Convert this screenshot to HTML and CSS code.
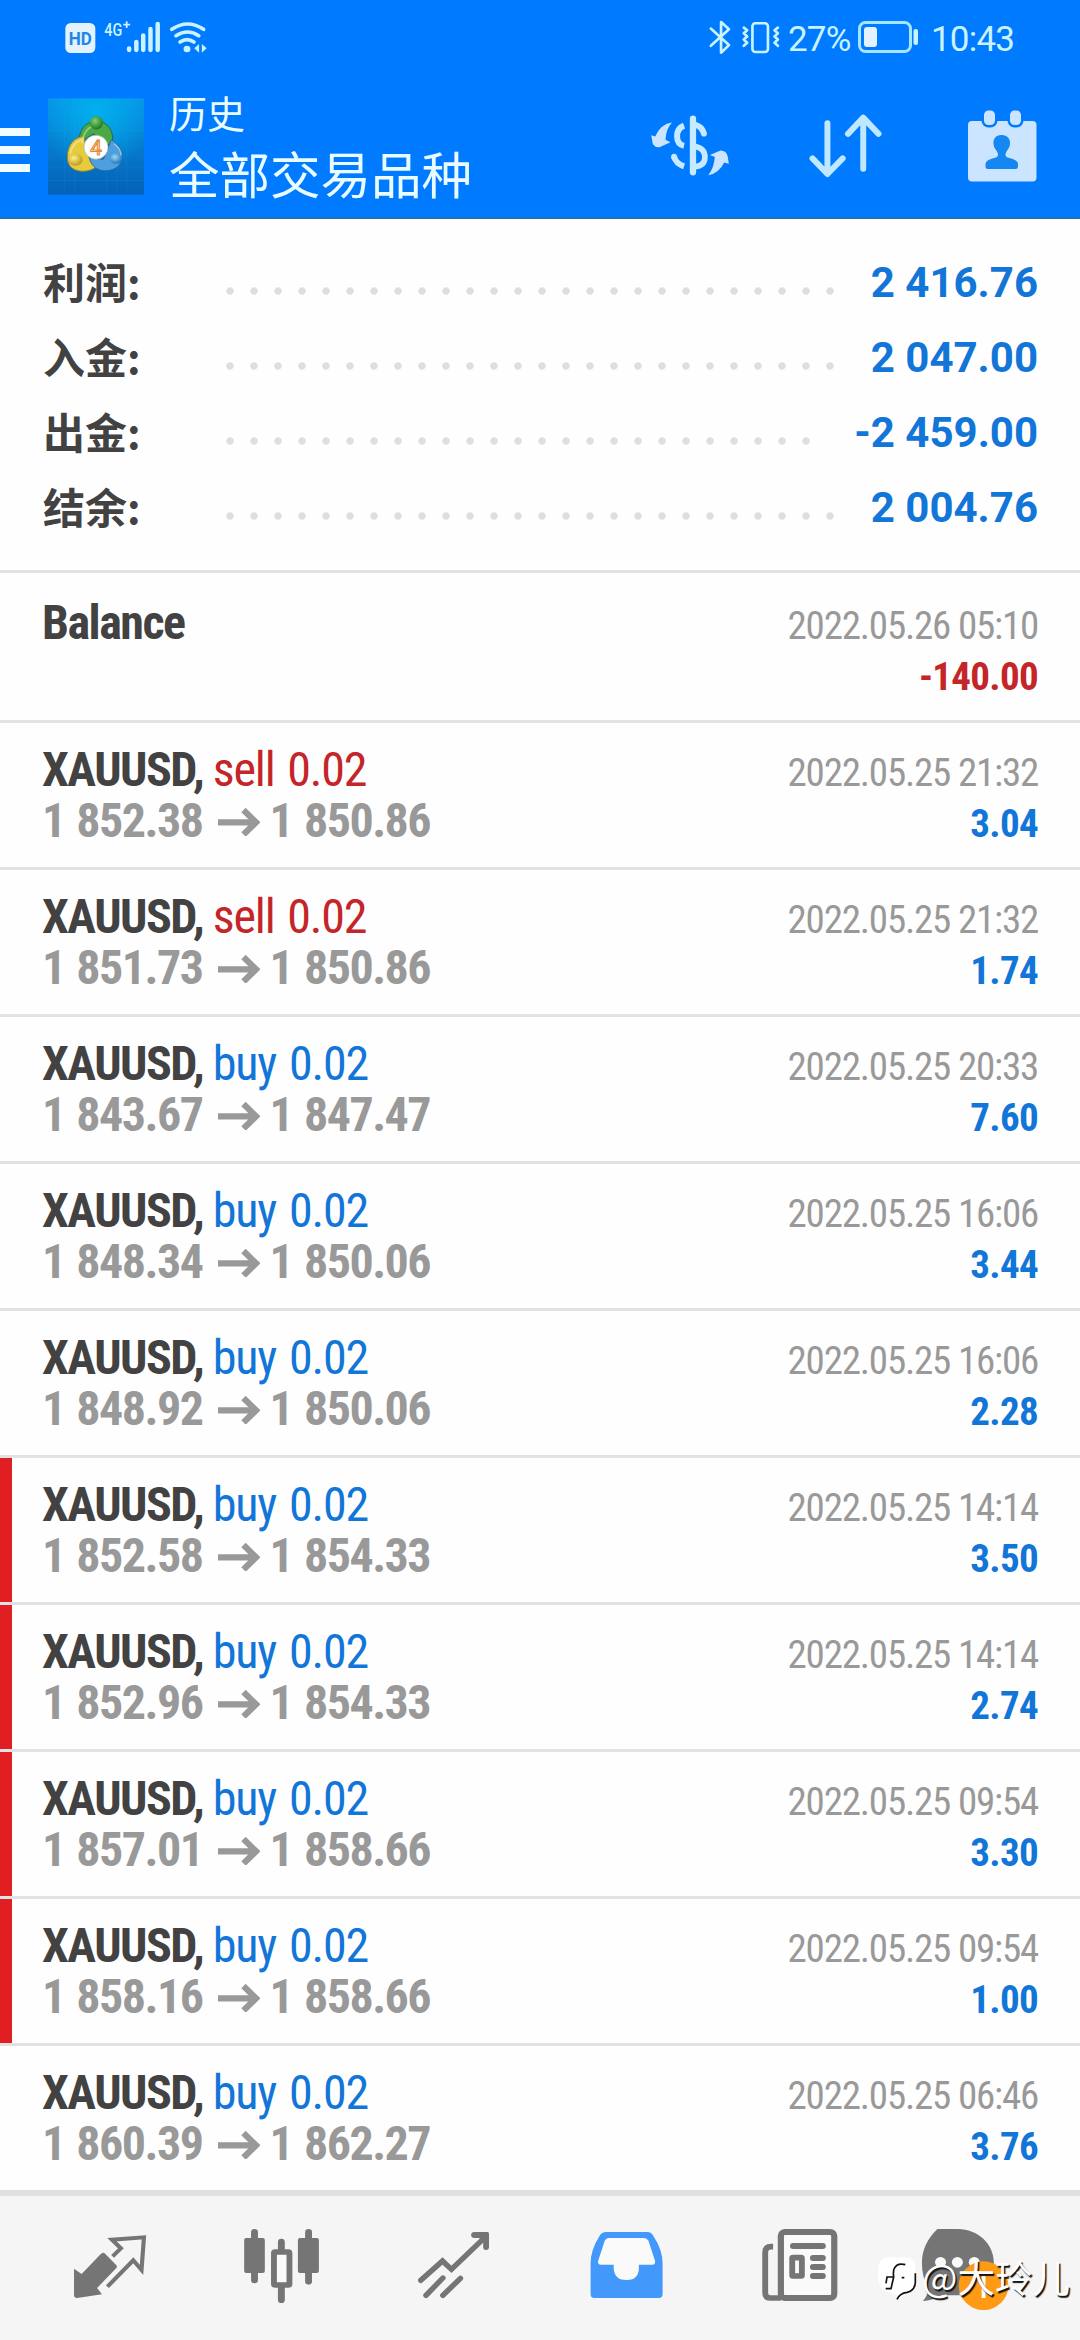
FILE: index.html
```html
<!DOCTYPE html>
<html lang="zh-CN">
<head>
<meta charset="utf-8">
<title>历史</title>
<link rel="stylesheet" href="styles.css">
</head>
<body>
<div class="app">
  <header class="header">
    <div class="status">
      <svg class="signal" viewBox="188 60 412 105" preserveAspectRatio="none">
        <rect x="189" y="69" width="87" height="90" rx="16" fill="#e2f3ff"/>
        <text x="199" y="136" font-size="53" font-weight="700" fill="#1f86e6" textLength="67" lengthAdjust="spacingAndGlyphs">HD</text>
        <text x="302" y="107" font-size="55" font-weight="500" fill="#c9f4ff" textLength="52" lengthAdjust="spacingAndGlyphs">4G</text>
        <path d="M357 74h20M367 64v20" stroke="#c9f4ff" stroke-width="5"/>
        <g stroke="#c9f4ff" stroke-width="13" stroke-linecap="round"><path d="M374 145v5M395 126v24M415 106v44M436 87v63M457 72v78"/></g>
        <g fill="none" stroke="#c9f4ff" stroke-width="11" stroke-linecap="round"><path d="M498 88q46-32 92 0M510 107q34-22 66 0M522 126q20-14 40 0"/></g>
        <circle cx="542" cy="147" r="10" fill="#c9f4ff"/>
        <path d="M577 132v26l-14-13zM585 132v26l14-13z" fill="#c9f4ff"/>
      </svg>
      <svg class="modes" viewBox="208 28 214 106">
        <g fill="none" stroke="#c9f4ff" stroke-width="8" stroke-linejoin="round" stroke-linecap="round">
          <path d="M213 54l55 50-24 23V34l24 22-55 50"/>
          <rect x="339" y="38" width="47" height="87" rx="9"/>
          <path d="M313 51l10 8-10 9 10 10-10 9 10 10-10 9M416 51l-10 8 10 9-10 10 10 9-10 10 10 9"/>
        </g>
      </svg>
      <span class="pct">27%</span>
      <svg class="battery" viewBox="0 0 61 34">
        <rect x="1.5" y="2.5" width="51" height="29" rx="6" fill="none" stroke="#a5e6ff" stroke-width="3"/>
        <rect x="6" y="7" width="13" height="20" rx="3" fill="#e2f3ff"/>
        <rect x="55.500" y="9" width="4.500" height="16" rx="2" fill="#c9f4ff"/>
      </svg>
      <span class="clock">10:43</span>
    </div>
    <div class="toolbar">
      <div class="menu"><i></i><i></i><i></i></div>
      <svg class="logo" viewBox="24 24 288 288">
        <defs>
          <linearGradient id="sky" x1="0" y1="0" x2="0" y2="1"><stop offset="0" stop-color="#0794e6"/><stop offset="1" stop-color="#0561b5"/></linearGradient>
          <radialGradient id="shine" cx=".5" cy=".15" r=".6"><stop offset="0" stop-color="#00b4f0" stop-opacity=".9"/><stop offset="1" stop-color="#00b4f0" stop-opacity="0"/></radialGradient>
          <radialGradient id="gr" cx=".4" cy=".35" r=".7"><stop offset="0" stop-color="#82d070"/><stop offset="1" stop-color="#17731f"/></radialGradient>
          <radialGradient id="ye" cx=".4" cy=".35" r=".7"><stop offset="0" stop-color="#fff08a"/><stop offset="1" stop-color="#b89212"/></radialGradient>
          <radialGradient id="bl" cx=".4" cy=".35" r=".7"><stop offset="0" stop-color="#9bd8fa"/><stop offset="1" stop-color="#1c6fb4"/></radialGradient>
        </defs>
        <rect x="24" y="24" width="288" height="288" fill="url(#sky)"/>
        <rect x="24" y="24" width="288" height="288" fill="url(#shine)"/>
        <path d="M74 24v288M104 24v288M200 24v288M230 24v288M260 24v288M24 70h288M24 120h288M24 230h288M24 270h288" stroke="#29b6f3" stroke-width="1" opacity=".35"/>
        <path d="M118 166C112 116 140 92 170 92S228 120 214 168L190 150 160 130 130 150Z" fill="#4aa845" stroke="#2a6a3c" stroke-width="3"/>
        <path d="M131 138C96 140 76 176 84 214 92 246 140 250 168 230L146 200Z" fill="#e6cb3c" stroke="#9a852a" stroke-width="3"/>
        <path d="M214 148C248 168 256 206 234 228 206 250 158 246 148 202L190 206Z" fill="#4d9fdd" stroke="#276a9f" stroke-width="3"/>
        <path d="M126 158q6-48 44-54M90 190q8-34 34-42M222 160q24 16 20 36" fill="none" stroke="#fff" stroke-opacity=".4" stroke-width="5"/>
        <circle cx="169" cy="97" r="20" fill="url(#gr)"/>
        <ellipse cx="106" cy="208" rx="22" ry="18" fill="url(#ye)"/>
        <ellipse cx="228" cy="204" rx="18" ry="16" fill="url(#bl)"/>
        <circle cx="168" cy="170" r="36" fill="#fff" stroke="#a8b8ae" stroke-width="2"/>
        <text x="168" y="193" text-anchor="middle" font-size="62" fill="#fff" stroke="#e58a34" stroke-width="3.500">4</text>
      </svg>
      <div class="titles"><div class="t1">历史</div><div class="t2">全部交易品种</div></div>
      <div class="actions">
        <svg class="dollar" viewBox="30 310 240 190">
          <path d="M96 336Q62 340 45 378L33 374 38 401Q46 412 58 410L91 395 76 388Q78 354 96 336ZM205 495Q238 488 253 456L267 460 264 439Q260 420 242 420L210 434 225 440Q222 474 205 495Z" fill="#cbe4ff"/>
          <g fill="none" stroke="#c6eaff"><path d="M132 345Q111 353 111 377T132 406M102 439Q108 460 132 468" stroke-width="18"/><path d="M102 439v1" stroke-width="18" stroke-linecap="round"/>
          <path d="M166 343Q186 348 192 369" stroke-width="18" stroke-linecap="round"/><path d="M166 408Q195 414 195 440T166 469" stroke-width="17"/><path d="M159 324V486" stroke-width="19" stroke-linecap="round"/></g>
        </svg>
        <svg class="sort" viewBox="506 310 228 196"><g fill="none" stroke="#bfe8ff" stroke-width="18" stroke-linecap="round" stroke-linejoin="round"><path d="M564 341V492M519 447L564 494 610 447M672 478V326M626 373L672 324 718 373"/></g></svg>
        <svg class="cal" viewBox="966 108 72 76">
          <rect x="968" y="121" width="68.500" height="60.500" rx="4" fill="#cbe4ff"/>
          <g fill="#cbe4ff" stroke="#007aff" stroke-width="5" paint-order="stroke"><rect x="984" y="110.500" width="11" height="14.500" rx="4.500"/><rect x="1010" y="110.500" width="11" height="14.500" rx="4.500"/></g>
          <path d="M1001.500 135c6 0 9 4 8.500 9 0 3-2 5-3.500 7.500q-2.500 4.500 1 6 10.500 2 10.500 6.500v2.500q0 2.500-2.500 2.500H988q-2.500 0-2.500-2.500V164q0-4.500 10.500-6.500 3.500-1.500 1-6c-1.500-2.500-3.500-4.500-3.500-7.500-.5-5 2-9 8-9Z" fill="#1587f2"/>
        </svg>
      </div>
    </div>
  </header>

  <section class="summary">
    <div class="sum"><span class="lab">利润:</span><span class="dots"></span><span class="val">2 416.76</span></div>
    <div class="sum"><span class="lab">入金:</span><span class="dots"></span><span class="val">2 047.00</span></div>
    <div class="sum"><span class="lab">出金:</span><span class="dots short"></span><span class="val">-2 459.00</span></div>
    <div class="sum"><span class="lab">结余:</span><span class="dots"></span><span class="val">2 004.76</span></div>
  </section>

  <svg width="0" height="0" class="defs"><symbol id="to" viewBox="0 0 42 28"><path d="M0 14.300H38M25.500 2L38 14.300 25.500 26.500" fill="none" stroke="#999" stroke-width="6.300"/></symbol></svg>

  <main class="list">
    <div class="row balance"><div class="left"><b>Balance</b></div><div class="right"><div class="date">2022.05.26 05:10</div><div class="amt red">-140.00</div></div></div>
    <div class="row"><div class="left"><div><b>XAUUSD,</b> <span class="red">sell 0.02</span></div><div class="px">1 852.38<svg><use href="#to"/></svg>1 850.86</div></div><div class="right"><div class="date">2022.05.25 21:32</div><div class="amt">3.04</div></div></div>
    <div class="row"><div class="left"><div><b>XAUUSD,</b> <span class="red">sell 0.02</span></div><div class="px">1 851.73<svg><use href="#to"/></svg>1 850.86</div></div><div class="right"><div class="date">2022.05.25 21:32</div><div class="amt">1.74</div></div></div>
    <div class="row"><div class="left"><div><b>XAUUSD,</b> <span class="blue">buy 0.02</span></div><div class="px">1 843.67<svg><use href="#to"/></svg>1 847.47</div></div><div class="right"><div class="date">2022.05.25 20:33</div><div class="amt">7.60</div></div></div>
    <div class="row"><div class="left"><div><b>XAUUSD,</b> <span class="blue">buy 0.02</span></div><div class="px">1 848.34<svg><use href="#to"/></svg>1 850.06</div></div><div class="right"><div class="date">2022.05.25 16:06</div><div class="amt">3.44</div></div></div>
    <div class="row"><div class="left"><div><b>XAUUSD,</b> <span class="blue">buy 0.02</span></div><div class="px">1 848.92<svg><use href="#to"/></svg>1 850.06</div></div><div class="right"><div class="date">2022.05.25 16:06</div><div class="amt">2.28</div></div></div>
    <div class="row sl"><div class="left"><div><b>XAUUSD,</b> <span class="blue">buy 0.02</span></div><div class="px">1 852.58<svg><use href="#to"/></svg>1 854.33</div></div><div class="right"><div class="date">2022.05.25 14:14</div><div class="amt">3.50</div></div></div>
    <div class="row sl"><div class="left"><div><b>XAUUSD,</b> <span class="blue">buy 0.02</span></div><div class="px">1 852.96<svg><use href="#to"/></svg>1 854.33</div></div><div class="right"><div class="date">2022.05.25 14:14</div><div class="amt">2.74</div></div></div>
    <div class="row sl"><div class="left"><div><b>XAUUSD,</b> <span class="blue">buy 0.02</span></div><div class="px">1 857.01<svg><use href="#to"/></svg>1 858.66</div></div><div class="right"><div class="date">2022.05.25 09:54</div><div class="amt">3.30</div></div></div>
    <div class="row sl"><div class="left"><div><b>XAUUSD,</b> <span class="blue">buy 0.02</span></div><div class="px">1 858.16<svg><use href="#to"/></svg>1 858.66</div></div><div class="right"><div class="date">2022.05.25 09:54</div><div class="amt">1.00</div></div></div>
    <div class="row"><div class="left"><div><b>XAUUSD,</b> <span class="blue">buy 0.02</span></div><div class="px">1 860.39<svg><use href="#to"/></svg>1 862.27</div></div><div class="right"><div class="date">2022.05.25 06:46</div><div class="amt">3.76</div></div></div>
  </main>

  <nav class="nav">
    <svg viewBox="194.600 156 249.700 258" preserveAspectRatio="none"><path d="M299 248Q303 248 306 252L338 286Q341 290 338 294L282 354 296 373 224 384Q215 384 215 376V296L237 312 292 253Z" fill="#757575"/><path d="M327 259L351 235 325 209 418 202 411 300 387 271 312 350" fill="none" stroke="#757575" stroke-width="12"/></svg>
    <svg viewBox="694 156 249.700 258" preserveAspectRatio="none"><g fill="#757575"><rect x="709" y="204" width="60" height="105" rx="6"/><rect x="865" y="204" width="61" height="105" rx="6"/></g><rect x="795.500" y="246" width="45" height="99" rx="3" fill="#fafafa" stroke="#757575" stroke-width="17"/><path d="M739 187V330M896 187V334M817 216V238M817 354V389" stroke="#757575" stroke-width="20" stroke-linecap="round"/></svg>
    <svg viewBox="1193.500 156 249.700 258" preserveAspectRatio="none"><g fill="none" stroke="#757575" stroke-width="16" stroke-linecap="round"><path d="M1222 331L1285 273 1311 298 1408 202"/><path d="M1237 376L1286 324M1286 376L1337 325" stroke-linecap="round"/></g><path d="M1377 186H1416Q1420 186 1420 191V231Q1420 240 1411 240 1403 240 1403 231V214L1391 204H1377Q1368 203 1368 195T1377 186Z" fill="#757575"/></svg>
    <svg viewBox="124.900 156 249.700 258" preserveAspectRatio="none"><path d="M192 186H312Q322 186 328 196 356 240 356 280V373Q356 384 345 384H157Q147 384 147 373V280Q147 240 174 196 181 186 192 186Z" fill="#4298fb"/><path d="M199 204H301Q311 204 315 212L334 272Q336 284 326 284H287Q291 330 251 330T214 284H178Q166 284 169 272L188 212Q192 204 199 204Z" fill="#fafafa"/></svg>
    <svg viewBox="624.400 156 249.700 258" preserveAspectRatio="none"><path d="M677 230H671Q654 230 654 248V368Q654 384 670 384H700" fill="none" stroke="#757575" stroke-width="17"/><rect x="699.500" y="186" width="155" height="198" rx="12" fill="#fafafa" stroke="#757575" stroke-width="18"/><g stroke="#757575" stroke-width="18" stroke-linecap="round"><path d="M735 228H821M793 264H821M793 291H821M793 318H821"/></g><rect x="732.500" y="263" width="28" height="55" rx="2" fill="#fafafa" stroke="#757575" stroke-width="17"/></svg>
    <svg viewBox="1123.800 156 249.700 258" preserveAspectRatio="none"><path d="M1213 177C1272 177 1318 222 1318 278S1272 374 1213 376H1166Q1140 392 1112 393 1130 372 1126 350 1109 320 1109 278 1109 222 1154 177 1213 177Z" fill="#757575"/><g fill="#fafafa"><circle cx="1163" cy="277" r="16"/><circle cx="1212" cy="277" r="16"/><circle cx="1261" cy="277" r="16"/></g><ellipse cx="1288" cy="347" rx="72" ry="73" fill="#ff9a14"/><path d="M1288 311V384" stroke="#fff" stroke-width="11"/></svg>
    <div class="mark">
      <svg viewBox="50 115 120 135"><path d="M82 122H142Q165 125 165 152V200Q163 220 142 228L112 250 114 237 76 224Q54 210 54 184V152Q56 124 82 122Z" fill="#fff"/><path d="M135 144Q110 137 101 157 98 167 100 181H80L77 200M100 181L92 216H76M124 183H132M165 170V198Q163 222 140 227 118 230 110 248" fill="none" stroke="#111" stroke-width="5"/></svg>
      <span>@大玲儿</span>
    </div>
  </nav>
</div>
</body>
</html>
```
FILE: styles.css
```css
* { box-sizing: border-box; }
body { margin: 0; background: #fefefe; font-family: Roboto, "Noto Sans CJK SC", sans-serif; color: #424242; }
svg { display: block; flex: none; overflow: visible; }
.defs { position: absolute; }
.app { width: 1080px; height: 2340px; display: flex; flex-direction: column; overflow: hidden; }

.header { height: 219px; background: #007aff; border-bottom: 2px solid #1f70bd; }
.status { height: 74px; display: flex; align-items: center; padding: 0 66px 0 65px; font-size: 35px; color: #c9f4ff; }
.signal { width: 142px; height: 35px; }
.modes { width: 71px; height: 35px; margin-left: auto; margin-right: 8px; }
.pct { width: 70px; letter-spacing: -0.8px; line-height: 41px; padding-top: 5px; }
.battery { width: 61px; height: 34px; margin-right: 12px; }
.clock { width: 83px; letter-spacing: -0.8px; line-height: 41px; padding-top: 5px; white-space: nowrap; }
.toolbar { height: 143px; display: flex; align-items: center; padding-right: 42px; }
.menu { width: 30px; margin: 8px 18px 0 0; display: flex; flex-direction: column; gap: 10px; }
.menu i { height: 8px; background: #f0fcff; }
.logo { width: 96px; height: 97px; margin: 2px 25px 0 0; }
.titles { display: flex; flex-direction: column; gap: 8px; padding-top: 6px; color: #e9fcff; }
.t1 { font-size: 38px; line-height: 48px; }
.t2 { font-size: 50.500px; line-height: 60px; }
.actions { margin-left: auto; display: flex; align-items: center; }
.dollar { width: 80px; height: 63px; margin-right: 78px; }
.sort { width: 76px; height: 65px; margin-right: 82px; }
.cal { width: 72px; height: 76px; }

.summary { height: 354px; padding: 26px 42px 0 43px; border-bottom: 3px solid #e2e2e2; }
.sum { height: 75px; display: flex; align-items: center; font-weight: 700; font-size: 42px; }
.lab { width: 175px; font-family: "Noto Sans CJK SC", sans-serif; line-height: 60px; padding-bottom: 4px; }
.dots { width: 624px; height: 10px; margin-top: 16px; background: radial-gradient(circle at 12px 5px, #dedede 3.200px, transparent 4.200px) 0 0 / 24px 10px repeat-x; }
.dots.short { width: 600px; }
.val { margin-left: auto; color: #1275d8; line-height: 50px; }

.list { font-stretch: 75%; }
.row { height: 147px; border-bottom: 3px solid #e2e2e2; display: flex; justify-content: space-between; align-items: baseline; padding: 21px 42px 0 42px; line-height: 51px; font-size: 48px; }
.row.balance { height: 150px; padding-top: 24px; }
.row.sl { background: linear-gradient(#df1f22, #df1f22) 0 0 / 12px 144px no-repeat; }
.row:last-child { border-bottom: 0; height: 144px; }
.left { letter-spacing: -1.500px; white-space: nowrap; }
.left .red, .left .blue { letter-spacing: -1.200px; word-spacing: 3px; }
.px { display: flex; align-items: center; font-weight: 700; color: #999; word-spacing: 2px; }
.px svg { width: 42px; height: 28px; margin: 0 10px 0 15px; position: relative; top: 1px; }
.right { text-align: right; font-size: 39px; }
.date { color: #999; letter-spacing: -1.200px; }
.amt { font-weight: 700; color: #1275d8; letter-spacing: -0.700px; }
.blue { color: #1275d8; }
.red, .amt.red { color: #c42528; }

.nav { flex: 1; position: relative; background: #f5f5f5; border-top: 6px solid #e0e0e0; display: flex; gap: 86px; padding: 26px 0 0 67px; }
.nav > svg { width: 86px; height: 86px; }
.mark { position: absolute; left: 877px; top: 55px; display: flex; align-items: center; color: #fff; font: 37.500px/50px "Noto Sans CJK SC", sans-serif; text-shadow: 1.500px 1.500px 1px #111; }
.mark svg { width: 40px; height: 45px; margin: 3px 5px 0 0; }
```
